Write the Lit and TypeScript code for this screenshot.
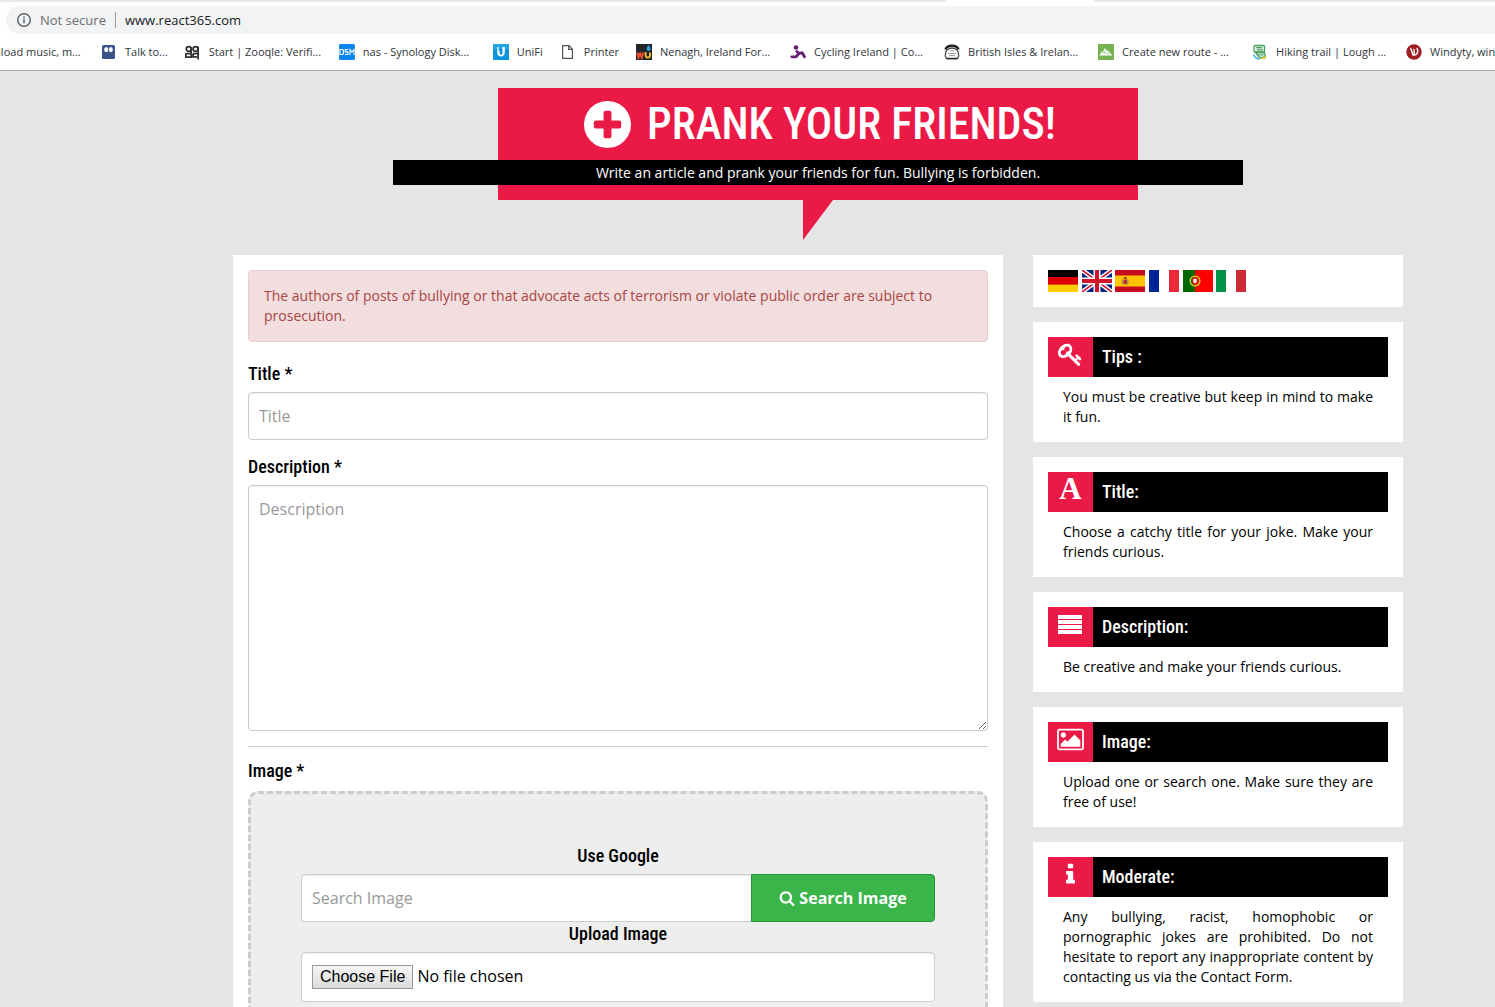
import { LitElement, html, css, svg, type TemplateResult } from "lit";
import { customElement, property } from "lit/decorators.js";

const PLUS_CIRCLE =
  "M1344 960v-128q0-26-19-45t-45-19h-256v-256q0-26-19-45t-45-19h-128q-26 0-45 19t-19 45v256h-256q-26 0-45 19t-19 45v128q0 26 19 45t45 19h256v256q0 26 19 45t45 19h128q26 0 45-19t19-45v-256h256q26 0 45-19t19-45zm320-64q0 209-103 385.5t-279.5 279.5-385.5 103-385.5-103-279.5-279.5-103-385.5 103-385.5 279.5-279.5 385.5-103 385.5 103 279.5 279.5 103 385.5z";
const SEARCH =
  "M1216 832q0-185-131.5-316.5t-316.5-131.5-316.5 131.5-131.5 316.5 131.5 316.5 316.5 131.5 316.5-131.5 131.5-316.5zm512 832q0 52-38 90t-90 38q-54 0-90-38l-343-342q-179 124-399 124-143 0-273.5-55.5t-225-150-150-225-55.5-273.5 55.5-273.5 150-225 225-150 273.5-55.5 273.5 55.5 225 150 150 225 55.5 273.5q0 220-124 399l343 343q37 37 37 90z";
const KEY =
  "M832 512q0-80-56-136t-136-56-136 56-56 136q0 42 19 83-41-19-83-19-80 0-136 56t-56 136 56 136 136 56 136-56 56-136q0-42-19-83 41 19 83 19 80 0 136-56t56-136zm851 704q0 17-49 66t-66 49q-9 0-28.5-16t-36.5-33-38.5-40-24.5-26l-96 96 220 220q28 28 28 68 0 42-39 81t-81 39q-40 0-68-28l-671-671q-176 131-365 131-163 0-265.5-102.5t-102.5-265.5q0-160 95-313t248-248 313-95q163 0 265.5 102.5t102.5 265.5q0 189-131 365l355 355 96-96q-3-3-26-24.5t-40-38.5-33-36.5-16-28.5q0-17 49-66t66-49q13 0 23 10 6 6 46 44.5t82 79.5 86.5 86 73 78 28.5 41z";
const PICTURE =
  "M704 576q0 80-56 136t-136 56-136-56-56-136 56-136 136-56 136 56 56 136zm1024 384v448h-1408v-192l320-320 160 160 512-512zm96-704h-1600q-13 0-22.5 9.5t-9.5 22.5v1216q0 13 9.5 22.5t22.5 9.5h1600q13 0 22.5-9.5t9.5-22.5v-1216q0-13-9.5-22.5t-22.5-9.5zm160 32v1216q0 66-47 113t-113 47h-1600q-66 0-113-47t-47-113v-1216q0-66 47-113t113-47h1600q66 0 113 47t47 113z";
const INFO =
  "M1216 1344v128q0 26-19 45t-45 19h-512q-26 0-45-19t-19-45v-128q0-26 19-45t45-19h64v-384h-64q-26 0-45-19t-19-45v-128q0-26 19-45t45-19h384q26 0 45 19t19 45v576h64q26 0 45 19t19 45zm-128-1152v192q0 26-19 45t-45 19h-256q-26 0-45-19t-19-45v-192q0-26 19-45t45-19h256q26 0 45 19t19 45z";

const glyph = (path: string, cls: string, width = 1792) =>
  html`<svg class=${cls} viewBox="0 0 ${width} 1792" fill="currentColor" aria-hidden="true"><path d=${path}></path></svg>`;

interface Bookmark {
  label: string;
  wide: boolean;
  icon: TemplateResult;
}

const bookmarks: Bookmark[] = [
  { label: "Download music, m...", wide: true, icon: svg`` },
  {
    label: "Talk to...",
    wide: false,
    icon: svg`<rect x="1" y="1" width="13" height="14" rx="1.5" fill="#3b5488"/><ellipse cx="5.2" cy="5.6" rx="2" ry="2.6" fill="#fff"/><ellipse cx="9.8" cy="5.6" rx="2" ry="2.6" fill="#fff"/>`,
  },
  {
    label: "Start | Zooqle: Verifi...",
    wide: true,
    icon: svg`<g fill="none" stroke="#333" stroke-width="1.8"><circle cx="3.7" cy="5" r="2.4"/><circle cx="10.500" cy="5" r="2.4"/><path d="M6.1 3v7.500M13.1 2.500v13M.5 9.600h5M8 9.600h5"/><path d="M.8 9.600v3.600h5.400V10M8.100 9.600v3.200h4"/></g>`,
  },
  {
    label: "nas - Synology Disk...",
    wide: true,
    icon: svg`<rect width="16" height="16" rx="1.5" fill="#0a85ee"/><g fill="none" stroke="#fff" stroke-width="1.1"><path d="M1 5.5h2.5l1 1v3l-1 1H1zM9.2 5.5H6.3v2.4h2.6v2.6H6M11 11V5.5l2 2.5 2-2.5V11"/></g>`,
  },
  {
    label: "UniFi",
    wide: false,
    icon: svg`<rect width="16" height="16" fill="#0b93dd"/><rect width="16" height="5" fill="#25a5e4"/><path d="M4.2 3v5.2c0 2.6 1.4 4.3 3.8 4.3s3.8-1.700 3.800-4.300V3h-2.300v5.500c0 1.200-.5 2-1.500 2.200-1-.2-1.500-1-1.500-2.200V6.500H5.500V3z" fill="#fff"/>`,
  },
  {
    label: "Printer",
    wide: false,
    icon: svg`<path d="M2.600 1.600h6.400l3.400 3.400v9.400H2.600zM8.600 1.600v3.800h3.800" fill="#fff" stroke="#555" stroke-width="1.200"/>`,
  },
  {
    label: "Nenagh, Ireland For...",
    wide: true,
    icon: svg`<rect width="16" height="16" fill="#20242b"/><path d="M1.200 8.500l1.200 5 1.700-4 1.700 4 1.500-5" fill="none" stroke="#f0512d" stroke-width="2"/><path d="M9.600 8v3.500c0 2.600 4.400 2.600 4.400 0V8.500" fill="none" stroke="#f2b731" stroke-width="1.900"/><path d="M12.600 1c1.400 2 2 3 2 4a2 2 0 0 1-4 0c0-1 .6-2 2-4z" fill="#2aa3dd"/>`,
  },
  {
    label: "Cycling Ireland | Co...",
    wide: true,
    icon: svg`<circle cx="6" cy="3.500" r="2.300" fill="#6a1b76"/><path d="M6.800 7.500l2.400 1.800-3.200 3.500H1.800M9.600 9.500l2.600-.8 2.300 4" fill="none" stroke="#6a1b76" stroke-width="2.800" stroke-linecap="round" stroke-linejoin="round"/>`,
  },
  {
    label: "British Isles & Irelan...",
    wide: true,
    icon: svg`<path d="M1.500 5.500C3 .5 13 .5 14.500 5.500" fill="none" stroke="#222" stroke-width="2.600"/><path d="M2 7.500c2-4.500 10-4.500 12 0l.8 4.500-1.300 2.500h-11L1.200 12z" fill="#fff" stroke="#444" stroke-width="1.200"/><path d="M5.500 6.800h5M4 9.500h8M5 11.600h6" stroke="#999" stroke-width=".9"/><path d="M2.500 14.600h11" stroke="#222" stroke-width="1.600"/>`,
  },
  {
    label: "Create new route - ...",
    wide: true,
    icon: svg`<rect width="16" height="16" fill="#76b250"/><path d="M1.500 11.500l2-4 1 1L7 4l2 3.500 1-1.300 4.300 5.300z" fill="#fff"/><path d="M5 9.500l1.500-2 1 2.500M9 10l1.200-1.500L11.500 10" fill="none" stroke="#76b250" stroke-width=".8"/>`,
  },
  {
    label: "Hiking trail | Lough ...",
    wide: true,
    icon: svg`<rect x="2" y="1.500" width="10.500" height="6.500" rx="1" fill="#e4f3e5" stroke="#47a060" stroke-width="1.300"/><path d="M4 3.600h6M5 5.800h6" stroke="#47a060" stroke-width="1.200"/><path d="M3.500 8.500h9l1 4.500-6 1z" fill="#d8edda" stroke="#47a060" stroke-width="1.300"/><path d="M5.500 10.800h6" stroke="#47a060"/><path d="M1.500 10.500c1 3 3 4.500 6 4.500" fill="none" stroke="#42b7d6" stroke-width="1.500"/><path d="M9 14l5-2v3H9z" fill="#e2cf45"/>`,
  },
  {
    label: "Windyty, wind...",
    wide: true,
    icon: svg`<circle cx="8" cy="8" r="7.700" fill="#a11d25"/><path d="M4.800 4.500l2 6c.5 1.300 1.600.9 1.500-.4L8 5.500M11.200 4.500c1 3 .4 6-2.600 6.600" fill="none" stroke="#fff" stroke-width="1.400" stroke-linecap="round"/>`,
  },
];

const flags: { name: string; art: TemplateResult }[] = [
  {
    name: "Deutsch",
    art: svg`<rect width="30" height="22" fill="#000"/><rect y="7" width="30" height="8" fill="#d00"/><rect y="14.600" width="30" height="7.400" fill="#ffce00"/>`,
  },
  {
    name: "English",
    art: svg`<rect width="30" height="22" fill="#00247d"/><path d="M0 0l30 22M30 0L0 22" stroke="#fff" stroke-width="4.600"/><path d="M0 0l30 22M30 0L0 22" stroke="#cf142b" stroke-width="1.600"/><path d="M15 0v22M0 11h30" stroke="#fff" stroke-width="7"/><path d="M15 0v22M0 11h30" stroke="#cf142b" stroke-width="4"/>`,
  },
  {
    name: "Español",
    art: svg`<rect width="30" height="22" fill="#c60b1e"/><rect y="5.500" width="30" height="11" fill="#ffc400"/><path d="M7 9.500h1.500v5H7zM12 9.500h1.500v5H12z" fill="#b08a6a"/><path d="M8.500 9.500h3.500v4l-1.700 1.300-1.800-1.300z" fill="#ad3a2c"/><rect x="8.800" y="7" width="3" height="2" fill="#a4531c"/>`,
  },
  {
    name: "Français",
    art: svg`<rect width="30" height="22" fill="#fff"/><rect width="10" height="22" fill="#002395"/><rect x="20" width="10" height="22" fill="#ed2939"/>`,
  },
  {
    name: "Português",
    art: svg`<rect width="30" height="22" fill="#f00"/><rect width="12" height="22" fill="#060"/><circle cx="12" cy="11" r="4.800" fill="none" stroke="#d8d01e" stroke-width="1.500"/><path d="M9.200 7.600h5.600v4.400c0 2-1.700 3-2.800 3.200-1.100-.2-2.800-1.200-2.800-3.200z" fill="#e01010"/><path d="M10.200 8.800h3.600v3.200l-1.800 1.600-1.800-1.600z" fill="#dfe6f5"/>`,
  },
  {
    name: "Italiano",
    art: svg`<rect width="30" height="22" fill="#fff"/><rect width="10" height="22" fill="#009246"/><rect x="20" width="10" height="22" fill="#ce2b37"/>`,
  },
];

@customElement("browser-bar")
class BrowserBar extends LitElement {
  static styles = css`
    :host {
      display: block;
      flex: none;
      background: #fff;
      border-bottom: 1px solid #a9a9a9;
      font-family: "Open Sans", "Noto Sans", sans-serif;
      overflow: hidden;
    }
    .tabs {
      display: flex;
      height: 2px;
    }
    .tab-rest {
      flex: 1;
      background: #e6eaed;
    }
    .tab-rest.before {
      flex: 0 1 947px;
      border-bottom-right-radius: 2px;
    }
    .tab-rest.after {
      border-bottom-left-radius: 2px;
    }
    .tab-active {
      flex: 0 1 146px;
    }
    .address {
      display: flex;
      align-items: center;
      height: 28px;
      margin: 4px 0 0 6px;
      padding-left: 10px;
      background: #f1f3f4;
      border-radius: 14px 0 0 14px;
      font-size: 13px;
      color: #6b6e73;
    }
    .info {
      width: 16px;
      height: 16px;
      margin-right: 8px;
    }
    .divider {
      width: 1px;
      height: 16px;
      margin: 0 9px;
      background: #9a9da1;
    }
    .url {
      flex: 1;
      border: 0;
      padding: 0;
      background: transparent;
      font: inherit;
      color: #202124;
      outline: none;
    }
    .bookmarks {
      display: flex;
      height: 36px;
      align-items: center;
      margin-left: -53px;
    }
    .bookmark {
      display: flex;
      flex: none;
      align-items: center;
      gap: 8px;
      padding-right: 17px;
      font-size: 11px;
      line-height: 16px;
      color: #303438;
      white-space: nowrap;
      text-decoration: none;
    }
    .bookmark.wide {
      box-sizing: border-box;
      width: 154px;
      padding-right: 0;
    }
    .favicon {
      flex: none;
      width: 16px;
      height: 16px;
    }
  `;
  render() {
    return html`
      <div class="tabs">
        <div class="tab-rest before"></div>
        <div class="tab-active"></div>
        <div class="tab-rest after"></div>
      </div>
      <div class="address">
        <svg class="info" viewBox="0 0 16 16" aria-hidden="true">
          <circle cx="8" cy="8" r="6.300" fill="none" stroke="#5f6368" stroke-width="1.500"></circle>
          <path d="M8 7.200v4M8 4.600v1.600" stroke="#5f6368" stroke-width="1.600"></path>
        </svg>
        <span>Not secure</span>
        <span class="divider"></span>
        <input class="url" type="text" aria-label="Address" value="www.react365.com" />
      </div>
      <nav class="bookmarks">
        ${bookmarks.map(
          (b) => html`<a class="bookmark ${b.wide ? "wide" : ""}" href="#">
            <svg class="favicon" viewBox="0 0 16 16" aria-hidden="true">${b.icon}</svg><span>${b.label}</span>
          </a>`,
        )}
      </nav>
    `;
  }
}

@customElement("tip-card")
class TipCard extends LitElement {
  @property() heading = "";
  static styles = css`
    :host {
      display: block;
      padding: 15px;
      background: #fff;
    }
    .head {
      display: flex;
      height: 40px;
      background: #000;
      color: #fff;
    }
    .icon {
      display: flex;
      flex: none;
      align-items: center;
      justify-content: center;
      box-sizing: border-box;
      width: 45px;
      padding-bottom: 6px;
      background: #eb1945;
    }
    .title {
      margin: 0;
      padding-left: 9px;
      font: 500 18px/40px "Roboto Condensed", "Liberation Sans Narrow", "Liberation Sans", sans-serif;
    }
    .text {
      margin: 0;
      padding: 10px 15px 0;
      font-size: 14px;
      line-height: 20px;
      text-align: justify;
    }
  `;
  render() {
    return html`
      <div class="head">
        <span class="icon"><slot name="icon"></slot></span>
        <h2 class="title">${this.heading}</h2>
      </div>
      <p class="text"><slot></slot></p>
    `;
  }
}

@customElement("app-root")
class AppRoot extends LitElement {
  static styles = css`
    :host {
      display: flex;
      flex-direction: column;
      height: 100vh;
      overflow: hidden;
      background: #e5e5e5;
      color: #000;
      font-family: "Open Sans", "Noto Sans", sans-serif;
      font-size: 14px;
      line-height: 20px;
    }
    .page {
      flex: 1;
      min-height: 0;
      overflow: hidden;
      padding: 17px 0 0 141px;
    }
    .banner {
      display: flex;
      flex-direction: column;
      align-items: center;
      margin-bottom: 15px;
    }
    .bubble {
      display: flex;
      flex-direction: column;
      align-items: center;
      width: 100%;
      max-width: 640px;
      padding-bottom: 15px;
      background: #eb1945;
      color: #fff;
    }
    .headline {
      display: flex;
      align-items: center;
      justify-content: center;
      gap: 12px;
      height: 72px;
      margin: 0;
      font: 500 44px/72px "Roboto Condensed", "Liberation Sans Narrow", "Liberation Sans", sans-serif;
      white-space: nowrap;
    }
    .plus {
      width: 55px;
      height: 55px;
    }
    .motto {
      width: 850px;
      margin: 0;
      background: #000;
      line-height: 25px;
      text-align: center;
    }
    .tail {
      width: 30px;
      height: 40px;
      background: #eb1945;
      clip-path: polygon(0 0, 100% 0, 0 100%);
    }
    .columns {
      display: grid;
      grid-template-columns: minmax(0, 77fr) minmax(0, 37fr);
      gap: 30px;
      align-items: start;
      max-width: 1170px;
      margin: 0 auto;
    }
    .panel {
      display: block;
      padding: 15px;
      background: #fff;
    }
    .alert {
      margin: 0 0 18px;
      padding: 15px;
      border: 1px solid #ebccd1;
      border-radius: 4px;
      background: #f2dede;
      color: #a94442;
    }
    .label {
      display: block;
      margin-bottom: 6px;
      font: 500 18px/24px "Roboto Condensed", "Liberation Sans Narrow", "Liberation Sans", sans-serif;
    }
    .alert + .label {
      margin-top: 20px;
    }
    .field {
      display: block;
      box-sizing: border-box;
      width: 100%;
      height: 48px;
      margin: 0 0 15px;
      padding: 10px;
      border: 1px solid #ccc;
      border-radius: 4px;
      background: #fff;
      box-shadow: inset 0 1px 1px rgba(0, 0, 0, 0.075);
      color: #000;
      font: 16px/26px "Open Sans", "Noto Sans", sans-serif;
    }
    .field::placeholder {
      color: #999;
      opacity: 1;
    }
    .area {
      height: 246px;
      resize: vertical;
    }
    .rule {
      margin: 0 0 12px;
      border: 0;
      border-top: 1px solid #ccc;
    }
    .drop {
      margin-top: 8px;
      padding: 50px;
      border: 3px dashed #ccc;
      border-radius: 10px;
      background: #eee;
    }
    .drop .label {
      text-align: center;
    }
    .search {
      display: flex;
    }
    .search .field {
      flex: 1;
      min-width: 0;
      margin: 0;
      border-right: 0;
      border-radius: 4px 0 0 4px;
    }
    .go {
      display: flex;
      align-items: center;
      justify-content: center;
      gap: 4px;
      flex: none;
      box-sizing: border-box;
      width: 184px;
      border: 1px solid #1f9431;
      border-radius: 0 4px 4px 0;
      background: #39b54a;
      color: #fff;
      font: bold 16px/26px "Open Sans", "Noto Sans", sans-serif;
    }
    .glass {
      width: 16px;
      height: 16px;
    }
    .file {
      height: 50px;
    }
    .file::file-selector-button {
      box-sizing: border-box;
      height: 24px;
      margin: 2px 4px 0 0;
      padding: 0 7px;
      border: 1px solid #999;
      border-radius: 0;
      background: linear-gradient(#f6f6f6, #dcdcdc);
      color: #000;
      font: 16px/20px "Liberation Sans", Arial, sans-serif;
    }
    .side {
      display: flex;
      flex-direction: column;
      gap: 15px;
    }
    .flags {
      height: 22px;
    }
    .flag-link {
      display: inline-block;
      height: 22px;
    }
    .flag {
      display: block;
      width: 30px;
      height: 22px;
    }
    .badge {
      display: flex;
    }
    .icon {
      width: 25px;
      height: 25px;
    }
    .icon-picture {
      width: 29px;
      height: 25px;
    }
    .letter {
      font: bold 31px/32px "Liberation Serif", serif;
    }
  `;
  render() {
    return html`
      <browser-bar></browser-bar>
      <div class="page">
        <header class="banner">
          <div class="bubble">
            <h1 class="headline">${glyph(PLUS_CIRCLE, "plus")}<span>PRANK YOUR FRIENDS!</span></h1>
            <p class="motto">Write an article and prank your friends for fun. Bullying is forbidden.</p>
          </div>
          <div class="tail"></div>
        </header>
        <div class="columns">
          <main class="panel">
            <p class="alert" role="alert">
              The authors of posts of bullying or that advocate acts of terrorism or violate public order are subject to
              prosecution.
            </p>
            <label class="label" for="title">Title *</label>
            <input class="field" id="title" type="text" placeholder="Title" />
            <label class="label" for="description">Description *</label>
            <textarea class="field area" id="description" placeholder="Description"></textarea>
            <hr class="rule" />
            <span class="label">Image *</span>
            <section class="drop">
              <label class="label" for="query">Use Google</label>
              <div class="search">
                <input class="field" id="query" type="text" placeholder="Search Image" />
                <button class="go" type="button">${glyph(SEARCH, "glass")}<span>Search Image</span></button>
              </div>
              <label class="label" for="upload">Upload Image</label>
              <input class="field file" id="upload" type="file" />
            </section>
          </main>
          <aside class="side">
            <div class="panel">
              <div class="flags">
                ${flags.map(
                  (f) => html`<a class="flag-link" href="#" aria-label=${f.name}><svg class="flag" viewBox="0 0 30 22" aria-hidden="true">${f.art}</svg></a> `,
                )}
              </div>
            </div>
            <tip-card heading="Tips :">
              <span slot="icon" class="badge">${glyph(KEY, "icon")}</span>
              You must be creative but keep in mind to make it fun.
            </tip-card>
            <tip-card heading="Title:">
              <span slot="icon" class="letter">A</span>
              Choose a catchy title for your joke. Make your friends curious.
            </tip-card>
            <tip-card heading="Description:">
              <span slot="icon" class="badge">
                <svg class="icon" viewBox="0 0 25 25" fill="#fff" aria-hidden="true">
                  <path d="M0 3h24v4H0zM0 8h24v4H0zM0 13h24v4H0zM0 18h24v4H0z"></path>
                </svg>
              </span>
              Be creative and make your friends curious.
            </tip-card>
            <tip-card heading="Image:">
              <span slot="icon" class="badge">${glyph(PICTURE, "icon-picture", 2048)}</span>
              Upload one or search one. Make sure they are free of use!
            </tip-card>
            <tip-card heading="Moderate:">
              <span slot="icon" class="badge">${glyph(INFO, "icon")}</span>
              Any bullying, racist, homophobic or pornographic jokes are prohibited. Do not hesitate to report any
              inappropriate content by contacting us via the Contact Form.
            </tip-card>
          </aside>
        </div>
      </div>
    `;
  }
}
